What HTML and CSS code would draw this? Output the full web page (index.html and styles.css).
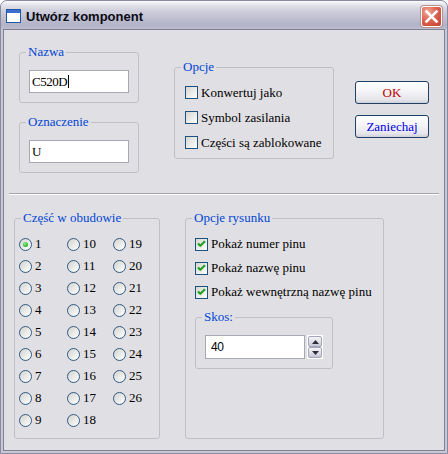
FILE: index.html
```html
<!DOCTYPE html>
<html lang="pl">
<head>
<meta charset="utf-8">
<title>Utwórz komponent</title>
<link rel="stylesheet" href="styles.css">
</head>
<body>
<div class="window">
  <div class="titlebar">
    <svg class="app-icon" viewBox="0 0 15 14" width="15" height="14">
      <rect x="0.5" y="0.5" width="14" height="13" fill="#fff" stroke="#2456a8"/>
      <rect x="1" y="1" width="13" height="3" fill="#3a6fd0"/>
    </svg>
    <span class="title">Utwórz komponent</span>
    <button class="close" type="button" aria-label="Zamknij">
      <svg viewBox="0 0 19 19" width="19" height="19">
        <path d="M4.5 4.5 L14.5 14.5 M14.5 4.5 L4.5 14.5" stroke="#fff" stroke-width="2.6" stroke-linecap="square"/>
      </svg>
    </button>
  </div>
  <div class="client">
    <div class="top">
      <div class="col-left">
        <fieldset class="group g-field">
          <legend>Nazwa</legend>
          <div class="field-body">
            <div class="textbox">C520D<span class="caret"></span></div>
          </div>
        </fieldset>
        <fieldset class="group g-field">
          <legend>Oznaczenie</legend>
          <div class="field-body">
            <div class="textbox">U</div>
          </div>
        </fieldset>
      </div>
      <fieldset class="group g-opts">
        <legend>Opcje</legend>
        <div class="opts-body">
          <label class="check"><span class="box"></span>Konwertuj jako</label>
          <label class="check"><span class="box"></span>Symbol zasilania</label>
          <label class="check"><span class="box"></span>Części są zablokowane</label>
        </div>
      </fieldset>
      <div class="buttons">
        <button class="btn btn-ok" type="button">OK</button>
        <button class="btn btn-cancel" type="button">Zaniechaj</button>
      </div>
    </div>
    <div class="sep"></div>
    <div class="bottom">
      <fieldset class="group g-part">
        <legend>Część w obudowie</legend>
        <div class="radios">
          <label class="radio"><span class="rb on"></span>1</label>
          <label class="radio"><span class="rb"></span>2</label>
          <label class="radio"><span class="rb"></span>3</label>
          <label class="radio"><span class="rb"></span>4</label>
          <label class="radio"><span class="rb"></span>5</label>
          <label class="radio"><span class="rb"></span>6</label>
          <label class="radio"><span class="rb"></span>7</label>
          <label class="radio"><span class="rb"></span>8</label>
          <label class="radio"><span class="rb"></span>9</label>
          <label class="radio"><span class="rb"></span>10</label>
          <label class="radio"><span class="rb"></span>11</label>
          <label class="radio"><span class="rb"></span>12</label>
          <label class="radio"><span class="rb"></span>13</label>
          <label class="radio"><span class="rb"></span>14</label>
          <label class="radio"><span class="rb"></span>15</label>
          <label class="radio"><span class="rb"></span>16</label>
          <label class="radio"><span class="rb"></span>17</label>
          <label class="radio"><span class="rb"></span>18</label>
          <label class="radio"><span class="rb"></span>19</label>
          <label class="radio"><span class="rb"></span>20</label>
          <label class="radio"><span class="rb"></span>21</label>
          <label class="radio"><span class="rb"></span>22</label>
          <label class="radio"><span class="rb"></span>23</label>
          <label class="radio"><span class="rb"></span>24</label>
          <label class="radio"><span class="rb"></span>25</label>
          <label class="radio"><span class="rb"></span>26</label>
        </div>
      </fieldset>
      <fieldset class="group g-draw">
        <legend>Opcje rysunku</legend>
        <div class="draw-body">
          <label class="check tall"><span class="box checked"><svg viewBox="0 0 11 11" width="11" height="11"><path d="M2 4.5 L4.3 6.8 L9 2.2" fill="none" stroke="#21a121" stroke-width="2.2"/></svg></span>Pokaż numer pinu</label>
          <label class="check tall"><span class="box checked"><svg viewBox="0 0 11 11" width="11" height="11"><path d="M2 4.5 L4.3 6.8 L9 2.2" fill="none" stroke="#21a121" stroke-width="2.2"/></svg></span>Pokaż nazwę pinu</label>
          <label class="check tall"><span class="box checked"><svg viewBox="0 0 11 11" width="11" height="11"><path d="M2 4.5 L4.3 6.8 L9 2.2" fill="none" stroke="#21a121" stroke-width="2.2"/></svg></span>Pokaż wewnętrzną nazwę pinu</label>
          <fieldset class="group g-skos">
            <legend>Skos:</legend>
            <div class="skos-body">
              <div class="textbox num">40</div>
              <div class="spin">
                <span class="spin-btn"><svg viewBox="0 0 7 4" width="7" height="4"><polygon points="0,4 7,4 3.5,0" fill="#2d2d3a"/></svg></span>
                <span class="spin-btn"><svg viewBox="0 0 7 4" width="7" height="4"><polygon points="0,0 7,0 3.5,4" fill="#2d2d3a"/></svg></span>
              </div>
            </div>
          </fieldset>
        </div>
      </fieldset>
    </div>
  </div>
</div>
</body>
</html>
```
FILE: styles.css
```css
* { box-sizing: border-box; }

body {
  margin: 0;
  background: #ffffff;
  font-family: "Liberation Serif", "Times New Roman", serif;
  font-size: 13px;
  color: #000;
}

.window {
  width: 448px;
  height: 454px;
  border: 1px solid #878aa0;
  border-radius: 7px 7px 0 0;
  background: #c8c8d6;
  display: flex;
  flex-direction: column;
  overflow: hidden;
}

.titlebar {
  height: 28px;
  flex: none;
  display: flex;
  align-items: flex-start;
  padding-left: 5px;
  background: linear-gradient(180deg, #fdfdfe 0%, #e6e6ee 12%, #cfcfdc 35%, #c0c0d1 60%, #b3b3c8 85%, #bcbccd 100%);
}

.app-icon { margin-top: 8px; flex: none; }

.title {
  margin-left: 5px;
  margin-top: 8px;
  font: bold 13px/16px "Liberation Sans", Arial, sans-serif;
  color: #0a0a14;
}

.close {
  margin-left: auto;
  margin-right: 5px;
  margin-top: 5px;
  width: 21px;
  height: 21px;
  padding: 0;
  border: 1px solid #fff;
  border-radius: 3px;
  background: radial-gradient(circle at 30% 25%, #f2a898 0%, #de6352 45%, #c4402f 100%);
  box-shadow: 0 0 0 1px #b89090;
  display: flex;
  align-items: center;
  justify-content: center;
}

.client {
  flex: 1;
  margin: 0 2px 2px;
  border: 1px solid #7f8096;
  background: #e0dfe3;
  display: flex;
  flex-direction: column;
}

/* group boxes */
.group {
  margin: 0;
  padding: 0;
  min-width: 0;
  border: 1px solid #bfbfc6;
  border-radius: 3px;
}

.group legend {
  margin-left: 6px;
  padding: 0 2px;
  line-height: 16px;
  font-size: 13px;
  color: #0046d5;
}

.top {
  display: flex;
  align-items: flex-start;
  padding: 14px 0 0 15px;
}

.col-left {
  width: 120px;
  display: flex;
  flex-direction: column;
  gap: 11px;
}

.field-body { padding: 10px 9px 9px; }

.textbox {
  width: 100px;
  height: 23px;
  border: 1px solid #a5a9b4;
  background: #fff;
  display: flex;
  align-items: center;
  padding-left: 2px;
  letter-spacing: -0.5px;
  line-height: 16px;
}

.caret {
  width: 1px;
  height: 13px;
  background: #000;
  margin-left: 1px;
}

.g-opts {
  width: 160px;
  margin-left: 35px;
  margin-top: 15px;
}

.opts-body { padding: 5px 10px 3px; }

.check {
  display: flex;
  align-items: center;
  gap: 3px;
  height: 25px;
  line-height: 16px;
  white-space: nowrap;
}

.check.tall { height: 24px; }

.box {
  width: 13px;
  height: 13px;
  flex: none;
  border: 1px solid #1c5180;
  background: linear-gradient(135deg, #d6d6d2 0%, #f2f2f0 70%, #ffffff 100%);
  display: flex;
}

.buttons {
  margin-left: 21px;
  margin-top: 37px;
  display: flex;
  flex-direction: column;
  gap: 11px;
}

.btn {
  width: 74px;
  height: 23px;
  padding: 0;
  border: 1px solid #1f3f66;
  border-radius: 3px;
  background: linear-gradient(180deg, #ffffff 0%, #f4f4f7 45%, #e4e4ea 85%, #cfcfd8 100%);
  font-family: "Liberation Serif", "Times New Roman", serif;
  font-size: 13px;
  line-height: 16px;
}

.btn-ok { color: #c00000; }
.btn-cancel { color: #0000e6; }

.sep {
  margin: 20px 5px 0;
  height: 2px;
  border-top: 1px solid #a7a6ae;
  border-bottom: 1px solid #ffffff;
}

.bottom {
  display: flex;
  gap: 25px;
  padding-left: 10px;
  margin-top: 15px;
}

.g-part { width: 146px; height: 229px; }
.g-draw { width: 199px; height: 229px; }

.radios {
  display: grid;
  grid-template-columns: 48px 46px auto;
  grid-template-rows: repeat(9, 22px);
  grid-auto-flow: column;
  padding: 7px 0 0 4px;
}

.radio {
  display: flex;
  align-items: center;
  gap: 3px;
  line-height: 16px;
}

.rb {
  width: 13px;
  height: 13px;
  flex: none;
  border: 1px solid #2f5a86;
  border-radius: 50%;
  background: linear-gradient(135deg, #d2d2ce 0%, #f0f0ee 65%, #ffffff 100%);
  display: flex;
  align-items: center;
  justify-content: center;
}

.rb.on::after {
  content: "";
  width: 5px;
  height: 5px;
  border-radius: 50%;
  background: radial-gradient(circle at 40% 35%, #8ef08e 0%, #3cc43c 50%, #1e9a1e 100%);
}

.draw-body { padding: 6px 9px 0; }

.g-skos {
  width: 138px;
  margin-top: 5px;
}

.skos-body {
  display: flex;
  gap: 2px;
  padding: 10px 9px 9px;
}

.textbox.num {
  height: 24px;
  padding-left: 5px;
  font-family: "Liberation Sans", Arial, sans-serif;
  font-size: 12px;
  letter-spacing: -0.3px;
}

.spin {
  width: 16px;
  height: 24px;
  display: flex;
  flex-direction: column;
  border: 1px solid #ffffff;
  background: #ffffff;
}

.spin-btn {
  flex: 1;
  border: 1px solid #a2a6b8;
  border-radius: 2px;
  background: linear-gradient(180deg, #f4f4f8 0%, #dcdce6 60%, #c6c6d4 100%);
  display: flex;
  align-items: center;
  justify-content: center;
}
```
